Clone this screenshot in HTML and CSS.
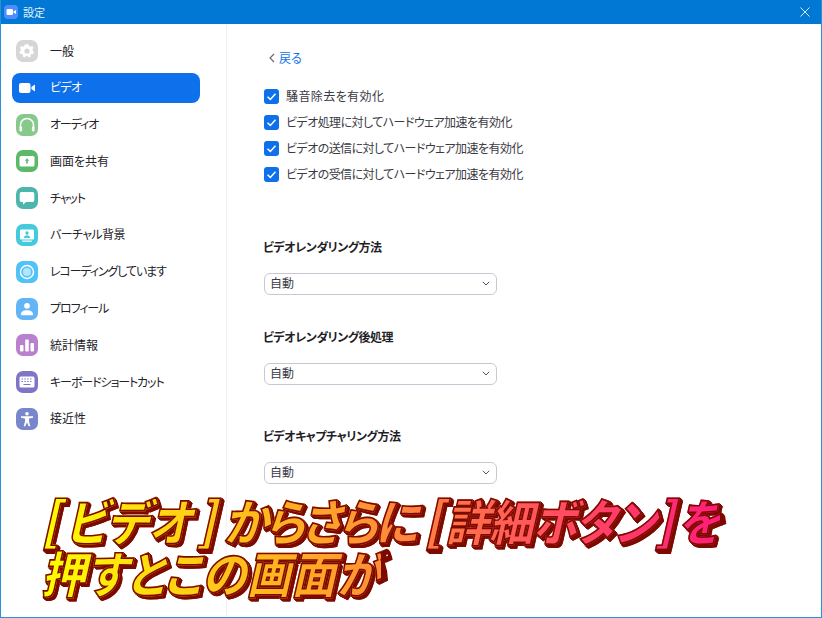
FILE: index.html
```html
<!DOCTYPE html>
<html lang="ja">
<head>
<meta charset="utf-8">
<title>設定</title>
<link rel="stylesheet" href="styles.css">
</head>
<body>
<div class="window">
  <header class="titlebar">
    <span class="app-icon"><svg viewBox="0 0 14 14" width="14" height="14"><rect x="2.5" y="4" width="6.5" height="6" rx="1.2" fill="#fff"/><path d="M9.5 6.4 12 5v4L9.5 7.6z" fill="#fff"/></svg></span>
    <span class="title">設定</span>
    <svg class="close" viewBox="0 0 10 10" width="10" height="10"><path d="M.5.5l9 9M9.5.5l-9 9" stroke="#d8ebfb" stroke-width="1" fill="none"/></svg>
  </header>
  <div class="content">
    <nav class="sidebar">
      <div class="item"><span class="icon i-general"><svg viewBox="0 0 22 22"><path d="M11 4.2l1.6.3.6 1.6 1.3.6 1.6-.6 1.4 1.6-.9 1.4.2 1.9 1.3 1-.8 2-1.7-.1-1.2 1.2.1 1.7-2 .6-1-1.4h-1.6l-1 1.4-2-.6.1-1.7-1.2-1.2-1.7.1-.8-2 1.3-1 .2-1.9-.9-1.4 1.4-1.6 1.6.6 1.3-.6.6-1.6z" fill="#fff"/><circle cx="11" cy="11" r="2.6" fill="#d6d6d6"/></svg></span><span class="label">一般</span></div>
      <div class="item active"><span class="icon i-video"><svg viewBox="0 0 22 22"><rect x="3" y="6" width="11.5" height="10" rx="2" fill="#fff"/><path d="M15.4 10l3.6-2.6v7.2L15.4 12z" fill="#fff"/></svg></span><span class="label kana-s">ビデオ</span></div>
      <div class="item"><span class="icon i-audio"><svg viewBox="0 0 22 22"><path d="M4.5 14.5V11a6.5 6.5 0 0 1 13 0v3.5" fill="none" stroke="#fff" stroke-width="1.5"/><rect x="3.5" y="12.5" width="2.6" height="5" rx="1.2" fill="#fff"/><rect x="15.9" y="12.5" width="2.6" height="5" rx="1.2" fill="#fff"/></svg></span><span class="label kana">オーディオ</span></div>
      <div class="item"><span class="icon i-share"><svg viewBox="0 0 22 22"><rect x="3.5" y="6" width="15" height="10.5" rx="1.5" fill="#fff"/><path d="M11 8.3l2.2 2.4h-1.4v2.8h-1.6v-2.8H8.8z" fill="#5cb96a"/></svg></span><span class="label">画面を共有</span></div>
      <div class="item"><span class="icon i-chat"><svg viewBox="0 0 22 22"><path d="M5.5 5h11A1.8 1.8 0 0 1 18.3 6.8v6.4A1.8 1.8 0 0 1 16.500 15H10l-3 2.800V15H5.500A1.800 1.800 0 0 1 3.700 13.200V6.800A1.800 1.800 0 0 1 5.500 5z" fill="#fff"/></svg></span><span class="label kana">チャット</span></div>
      <div class="item"><span class="icon i-vbg"><svg viewBox="0 0 22 22"><rect x="4" y="5.500" width="14" height="10" rx="1.200" fill="#fff"/><circle cx="11" cy="9" r="1.700" fill="#45c9dc"/><path d="M7.800 14c.3-2 1.600-2.700 3.200-2.700s2.900.7 3.200 2.700z" fill="#45c9dc"/><rect x="6" y="16.500" width="10" height="1.200" rx=".6" fill="#fff"/></svg></span><span class="label kana-s">バーチャル背景</span></div>
      <div class="item"><span class="icon i-rec"><svg viewBox="0 0 22 22"><circle cx="11" cy="11" r="6.500" fill="none" stroke="#fff" stroke-width="1.400"/><circle cx="11" cy="11" r="4" fill="#b5e5fb"/></svg></span><span class="label kana">レコーディングしています</span></div>
      <div class="item"><span class="icon i-profile"><svg viewBox="0 0 22 22"><circle cx="11" cy="7.800" r="2.900" fill="#fff"/><path d="M5 16.300c0-2.800 2.600-4 6-4s6 1.200 6 4c0 .6-.4 1-1 1H6c-.6 0-1-.4-1-1z" fill="#fff"/></svg></span><span class="label kana">プロフィール</span></div>
      <div class="item"><span class="icon i-stats"><svg viewBox="0 0 22 22"><rect x="4" y="11" width="3.500" height="6.500" rx="1" fill="#fff"/><rect x="9.200" y="5.500" width="3.600" height="12" rx="1" fill="#fff"/><rect x="14.500" y="9" width="3.500" height="8.500" rx="1" fill="#fff"/></svg></span><span class="label">統計情報</span></div>
      <div class="item"><span class="icon i-kb"><svg viewBox="0 0 22 22"><rect x="3.500" y="5.500" width="15" height="11" rx="1.500" fill="#fff"/><path d="M5.500 8h1.500M8.300 8h1.500M11.100 8h1.500M14 8h1.500M5.500 10.500h1.500M8.300 10.500h1.500M11.100 10.500h1.500M14 10.500h1.500M7.500 13.500h7" stroke="#7e75c6" stroke-width="1.200"/></svg></span><span class="label kana">キーボードショートカット</span></div>
      <div class="item"><span class="icon i-access"><svg viewBox="0 0 22 22"><circle cx="11" cy="5.800" r="1.800" fill="#fff"/><path d="M5 8.300h12v1.500l-4 .7v3l1.300 4.700h-1.600L11 14.200l-1.700 4H7.700L9 13.500v-3l-4-.7z" fill="#fff"/></svg></span><span class="label">接近性</span></div>
    </nav>
    <main class="main">
      <div class="back"><svg viewBox="0 0 6 10" width="6" height="10"><path d="M5 1 1 5l4 4" fill="none" stroke="#6b6b78" stroke-width="1.200"/></svg><span class="label">戻る</span></div>
      <div class="checks">
        <div class="check"><span class="box"><svg viewBox="0 0 15 15"><path d="M3.500 7.800l2.800 2.600 5.200-5.600" fill="none" stroke="#fff" stroke-width="1.500"/></svg></span><span class="label wide">騒音除去を有効化</span></div>
        <div class="check"><span class="box"><svg viewBox="0 0 15 15"><path d="M3.500 7.800l2.800 2.600 5.200-5.600" fill="none" stroke="#fff" stroke-width="1.500"/></svg></span><span class="label tight">ビデオ処理に対してハードウェア加速を有効化</span></div>
        <div class="check"><span class="box"><svg viewBox="0 0 15 15"><path d="M3.500 7.800l2.800 2.600 5.200-5.600" fill="none" stroke="#fff" stroke-width="1.500"/></svg></span><span class="label tight">ビデオの送信に対してハードウェア加速を有効化</span></div>
        <div class="check"><span class="box"><svg viewBox="0 0 15 15"><path d="M3.500 7.800l2.800 2.600 5.200-5.600" fill="none" stroke="#fff" stroke-width="1.500"/></svg></span><span class="label tight">ビデオの受信に対してハードウェア加速を有効化</span></div>
      </div>
      <section class="group first">
        <h2>ビデオレンダリング方法</h2>
        <div class="select"><span class="label">自動</span><svg viewBox="0 0 8 5" width="8" height="5"><path d="M.8.8 4 4 7.200.8" fill="none" stroke="#55555f" stroke-width="1"/></svg></div>
      </section>
      <section class="group second">
        <h2>ビデオレンダリング後処理</h2>
        <div class="select"><span class="label">自動</span><svg viewBox="0 0 8 5" width="8" height="5"><path d="M.8.8 4 4 7.200.8" fill="none" stroke="#55555f" stroke-width="1"/></svg></div>
      </section>
      <section class="group third">
        <h2>ビデオキャプチャリング方法</h2>
        <div class="select"><span class="label">自動</span><svg viewBox="0 0 8 5" width="8" height="5"><path d="M.8.8 4 4 7.200.8" fill="none" stroke="#55555f" stroke-width="1"/></svg></div>
      </section>
    </main>
  </div>
  <div class="caption">
    <div class="line line-one"><span class="bracket open">[</span>ビデオ<span class="bracket shut">]</span><span class="squeeze">からさらに</span><span class="bracket open-mid">[</span><span class="squeeze-s">詳細ボタン</span><span class="bracket shut-end">]</span>を</div>
    <div class="line line-two">押すとこの画面が</div>
  </div>
</div>
</body>
</html>
```

FILE: styles.css
```css
* { box-sizing: border-box; }
html, body { margin: 0; padding: 0; background: #fff; }
body { font-family: "Noto Sans CJK JP", "Noto Sans", sans-serif; font-size: 12px; color: #23232b; font-feature-settings: "palt"; }
.window { position: relative; width: 822px; height: 618px; overflow: hidden; display: flex; flex-direction: column; border: 1px solid #2b90d9; border-top: 0; }
.titlebar { height: 24px; margin: 0 -1px; flex: none; background: #0078d4; display: flex; align-items: center; padding: 0 12px 0 4px; color: #e6f2fb; font-size: 11px; gap: 5px; }
.app-icon { width: 14px; height: 14px; border-radius: 4px; background: #4d8dff; display: block; }
.app-icon svg { display: block; }
.title { flex: 1; font-feature-settings: normal; }
.close { display: block; }
.content { flex: 1; display: flex; min-height: 0; }
.sidebar { width: 226px; flex: none; border-right: 1px solid #f1f1f4; padding: 12px 26px 0 11px; }
.item { height: 30px; margin-bottom: 6.800px; display: flex; align-items: center; gap: 12px; padding-left: 4px; border-radius: 8px; font-size: 12px; }
.item .icon { width: 22px; height: 22px; border-radius: 7px; flex: none; display: block; }
.icon svg { display: block; width: 22px; height: 22px; }
.label { padding-bottom: 2px; }
.kana { letter-spacing: -1.1px; }
.kana-s { letter-spacing: -.6px; }
.active { background: #0e71eb; color: #fff; }
.i-general { background: #d6d6d6; }
.i-audio { background: #86c98a; }
.i-share { background: #5cb96a; }
.i-chat { background: #4db6ac; }
.i-vbg { background: #45c9dc; }
.i-rec { background: #4fc3f7; }
.i-profile { background: #64b5f6; }
.i-stats { background: #ba80d0; }
.i-kb { background: #7e75c6; }
.i-access { background: #7986cb; }
.main { flex: 1; padding: 25px 0 0 37px; }
.back { display: flex; align-items: center; gap: 4px; height: 18px; padding-left: 5px; color: #0e71eb; font-size: 12px; }
.back svg { display: block; }
.checks { margin-top: 20px; display: flex; flex-direction: column; gap: 8.300px; }
.check { display: flex; align-items: center; gap: 7px; height: 18px; color: #3a3a44; }
.wide { letter-spacing: .4px; }
.tight { letter-spacing: -.55px; }
.box { width: 15px; height: 15px; border-radius: 3px; background: #0e71eb; display: block; flex: none; }
.box svg { display: block; width: 15px; height: 15px; }
h2 { margin: 0 0 0 -1px; font-size: 12px; font-weight: 700; line-height: 18px; color: #1f1f28; letter-spacing: -.5px; }
.group.first { margin-top: 54px; }
.group.second { margin-top: 33px; }
.group.third { margin-top: 42px; }
.select { width: 233px; height: 22px; margin-top: 17px; border: 1px solid #c8c8d4; border-radius: 6px; display: flex; align-items: center; justify-content: space-between; padding: 0 6px 0 5px; color: #3a3a44; }
.select svg { display: block; }
.caption { position: absolute; left: 40px; top: 494px; font-weight: 900; font-size: 45px; line-height: 52px; white-space: nowrap; filter: drop-shadow(1px 1px 0 #7d0a00) drop-shadow(1px 1px 0 #7d0a00) drop-shadow(1px 1px 0 #7d0a00); }
.line { width: max-content; font-style: italic; background: linear-gradient(90deg, #ffff00 0, #ffa826 270px, #ff5a5a 480px, #ff1a7a 690px); background-clip: text; -webkit-background-clip: text; -webkit-text-fill-color: transparent; -webkit-text-stroke: 1.500px #7d0a00; transform: scaleY(1.1); transform-origin: left center; }
.bracket { font-size: 48px; line-height: 40px; }
.open { margin-right: 5px; }
.shut { margin: 0 8px 0 5px; }
.open-mid { margin: 0 2px 0 9px; }
.shut-end { margin: 0 3px 0 1px; }
.squeeze { letter-spacing: -3px; }
.squeeze-s { letter-spacing: -1.600px; }
```
